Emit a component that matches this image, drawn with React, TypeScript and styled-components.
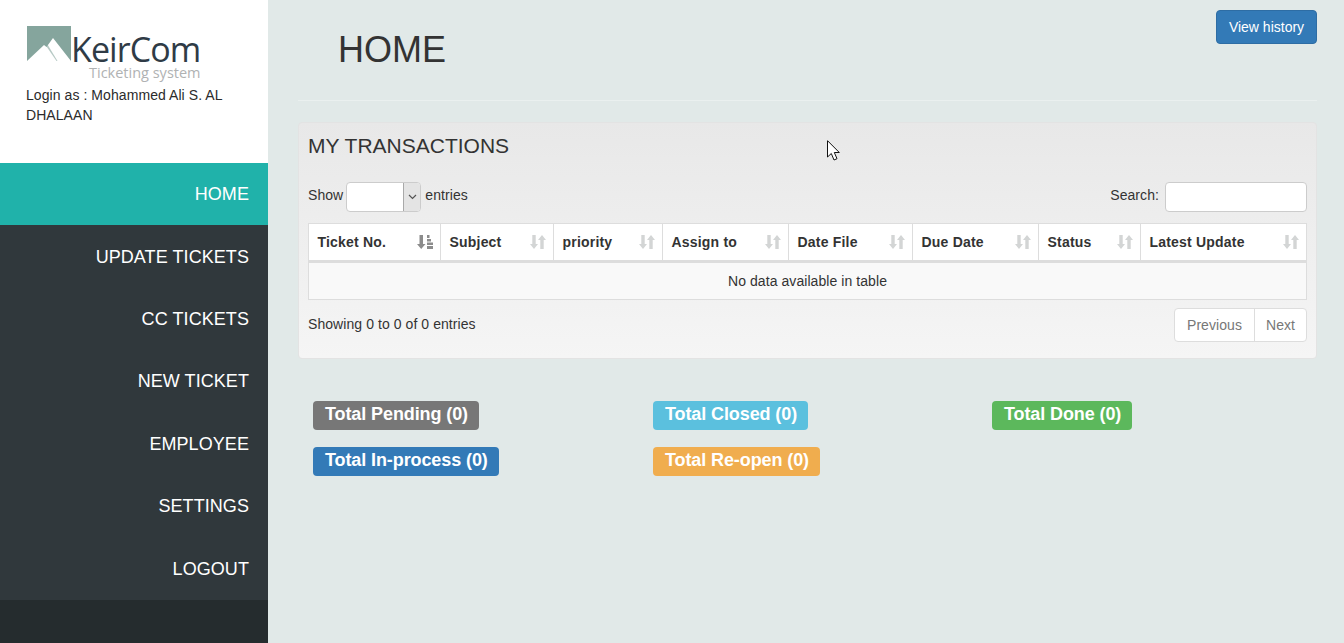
import styled, { createGlobalStyle } from 'styled-components'

const GlobalStyle = createGlobalStyle`
  * { box-sizing: border-box; }
  html, body { margin: 0; padding: 0; height: 100%; }
  body {
    font-family: "Liberation Sans", Arial, sans-serif;
    font-size: 14px;
    line-height: 20px;
    letter-spacing: 0.07px;
    color: #333;
    background: #e1e9e8;
  }
`;

const Page = styled.div`
  display: flex;
  width: 1344px;
  height: 643px;
  overflow: hidden;
`;

const Sidebar = styled.aside`
  width: 268px;
  flex: none;
  display: flex;
  flex-direction: column;
  background: #252c2e;
`;

const Brand = styled.div`
  height: 163px;
  background: #fff;
  padding: 26px 26px 0;
`;

const LogoRow = styled.div`
  display: flex;
  height: 36px;
  align-items: flex-end;
  padding-left: 1px;
`;

const LogoName = styled.span`
  font-family: "Open Sans", sans-serif;
  font-size: 34px;
  line-height: 26px;
  letter-spacing: -0.9px;
  color: #2f3b46;
`;

const LogoTag = styled.div`
  font-family: "Open Sans", sans-serif;
  font-size: 14.5px;
  line-height: 18px;
  letter-spacing: 0;
  color: #b0b2b3;
  margin: 2px 0 0 63px;
`;

const LoginText = styled.div`
  color: #2b2b2b;
  margin-top: 3px;
`;

const NavList = styled.nav`
  background: #30383c;
`;

const NavItem = styled.a<{ $active?: boolean }>`
  display: flex;
  align-items: center;
  justify-content: flex-end;
  height: 62.4px;
  padding-right: 19px;
  font-size: 18px;
  color: #fff;
  background: ${props => (props.$active ? '#20b2aa' : 'transparent')};
`;

const Main = styled.main`
  flex: 1;
  padding: 0 28px 0 30px;
`;

const PageHeader = styled.header`
  height: 101px;
  display: flex;
  justify-content: space-between;
  align-items: flex-start;
  border-bottom: 1px solid #eaf0ef;
`;

const Title = styled.h1`
  margin: 30px 0 0 40px;
  font-size: 36px;
  line-height: 40px;
  font-weight: 400;
  letter-spacing: 0;
  color: #333;
`;

const HistoryButton = styled.button`
  margin-top: 10px;
  width: 101px;
  height: 34px;
  padding: 0;
  font: inherit;
  color: #fff;
  background: #337ab7;
  border: 1px solid #2e6da4;
  border-radius: 4px;
`;

const Well = styled.section`
  position: relative;
  margin-top: 21px;
  height: 237px;
  padding: 0 9px 0 10px;
  background: linear-gradient(to bottom, #e8e8e8, #f5f5f5);
  border: 1px solid #e3e3e3;
  border-radius: 4px;
`;

const WellTitle = styled.h3`
  margin: 11px 0 0 -1px;
  font-size: 21px;
  line-height: 24px;
  font-weight: 400;
  letter-spacing: 0;
  color: #333;
`;

const Controls = styled.div`
  display: flex;
  justify-content: space-between;
  margin: 24px 0 11px -1px;
  height: 30px;
`;

const ControlGroup = styled.label`
  display: flex;
  align-items: flex-start;
  gap: 4px;
  line-height: 26px;
`;

const SelectBox = styled.div`
  display: flex;
  justify-content: flex-end;
  width: 75px;
  height: 30px;
  margin-left: -1px;
  background: #fff;
  border: 1px solid #ccc;
  border-radius: 4px;
  overflow: hidden;
`;

const SelectArrow = styled.span`
  display: flex;
  align-items: center;
  justify-content: center;
  width: 17px;
  background: #e4e4e4;
  border-left: 1px solid #a9a9a9;
  color: #555;
`;

const SearchInput = styled.input`
  width: 142px;
  height: 30px;
  background: #fff;
  border: 1px solid #ccc;
  border-radius: 4px;
  margin-left: 2px;
`;

const Table = styled.table`
  width: 998px;
  margin-left: -1px;
  table-layout: fixed;
  border-collapse: collapse;
  background: #f9f9f9;
`;

const HeadCell = styled.th<{ $width: number }>`
  width: ${props => props.$width}px;
  height: 38px;
  padding: 0 7px 0 8.5px;
  background: #fff;
  border: 1px solid #ddd;
  border-bottom: 3px solid #ddd;
  text-align: left;
  letter-spacing: 0.2px;
  color: #333;
`;

const HeadInner = styled.div`
  display: flex;
  align-items: center;
  justify-content: space-between;
`;

const SortIcon = styled.svg<{ $active?: boolean }>`
  flex: none;
  width: 16px;
  height: 16px;
  fill: ${props => (props.$active ? '#8c8c8c' : '#d3d5d5')};
`;

const EmptyCell = styled.td`
  height: 38px;
  padding: 0;
  border: 1px solid #ddd;
  text-align: center;
`;

const Footer = styled.div`
  display: flex;
  justify-content: space-between;
  margin: 8px 0 0 -1px;
  height: 34px;
  line-height: 32px;
`;

const Pager = styled.div`
  display: flex;
  background: #fff;
  border: 1px solid #ddd;
  border-radius: 4px;
  height: 34px;
  color: #777;
`;

const PagerItem = styled.span<{ $width: number }>`
  display: flex;
  align-items: center;
  justify-content: center;
  width: ${props => props.$width}px;
  & + & { border-left: 1px solid #ddd; }
`;

const Cursor = styled.svg`
  position: absolute;
  left: 528px;
  top: 17px;
  width: 13px;
  height: 21px;
`;

const TotalsGrid = styled.div`
  display: grid;
  grid-template-columns: 340px 339px auto;
  grid-auto-rows: 29px;
  row-gap: 17px;
  justify-items: start;
  margin: 42px 0 0 15px;
`;

const TotalBadge = styled.span<{ $color: string }>`
  display: inline-flex;
  align-items: center;
  height: 29px;
  padding: 0 11px 3px 12px;
  font-size: 18px;
  font-weight: 700;
  letter-spacing: -0.1px;
  color: #fff;
  background: ${props => props.$color};
  border-radius: 4px;
`;

const navItems = ['HOME', 'UPDATE TICKETS', 'CC TICKETS', 'NEW TICKET', 'EMPLOYEE', 'SETTINGS', 'LOGOUT'];

const columns = [
  { name: 'Ticket No.', width: 132, sorted: true },
  { name: 'Subject', width: 113 },
  { name: 'priority', width: 109 },
  { name: 'Assign to', width: 126 },
  { name: 'Date File', width: 124 },
  { name: 'Due Date', width: 126 },
  { name: 'Status', width: 102 },
  { name: 'Latest Update', width: 166 },
];

const totals = [
  { label: 'Total Pending (0)', color: '#777777' },
  { label: 'Total Closed (0)', color: '#5bc0de' },
  { label: 'Total Done (0)', color: '#5cb85c' },
  { label: 'Total In-process (0)', color: '#337ab7' },
  { label: 'Total Re-open (0)', color: '#f0ad4e' },
];

const Logo = () => (
  <svg width="44" height="36" viewBox="0 0 44 36">
    <rect width="44" height="35" fill="#85a59d" />
    <path d="M0 35L17 19L19.500 21L26 12L44 35Z" fill="#fff" />
    <path d="M20.500 18.500L30.500 35H29.500L19.500 20.500Z" fill="#85a59d" opacity="0.6" />
  </svg>
);

const SortGlyph = ({ active }: { active?: boolean }) => (
  <SortIcon $active={active} viewBox="0 0 16 16">
    {active ? (
      <path d="M2.500 1h3.500v9h2.500L4.200 15 0 10h2.500zM10 1h2.500v3H10zM10 5h4v2.500h-4zM10 8.500h6V11h-6zM10 12h6v3h-6z" />
    ) : (
      <path d="M2.300 1h3.400v9H8l-4 5-4-5h2.300zM10.300 15V6H8l4-5 4 5h-2.300v9z" />
    )}
  </SortIcon>
);

const App = () => {
  return (
    <Page>
      <GlobalStyle />
      <Sidebar>
        <Brand>
          <LogoRow>
            <Logo />
            <LogoName>KeirCom</LogoName>
          </LogoRow>
          <LogoTag>Ticketing system</LogoTag>
          <LoginText>Login as : Mohammed Ali S. AL DHALAAN</LoginText>
        </Brand>
        <NavList>
          {navItems.map((item, i) => (
            <NavItem key={item} $active={i === 0}>{item}</NavItem>
          ))}
        </NavList>
      </Sidebar>
      <Main>
        <PageHeader>
          <Title>HOME</Title>
          <HistoryButton>View history</HistoryButton>
        </PageHeader>
        <Well>
          <WellTitle>MY TRANSACTIONS</WellTitle>
          <Cursor viewBox="0 0 13 21">
            <path d="M.5.700V17l3.800-3.500L7 20l3-1.300-2.700-6.200h5z" fill="#fff" stroke="#111" strokeWidth="1" />
          </Cursor>
          <Controls>
            <ControlGroup>
              Show
              <SelectBox>
                <SelectArrow>
                  <svg width="9" height="6" viewBox="0 0 9 6">
                    <path d="M1 1l3.500 3.500L8 1" fill="none" stroke="#555" strokeWidth="1.200" />
                  </svg>
                </SelectArrow>
              </SelectBox>
              entries
            </ControlGroup>
            <ControlGroup>
              Search:
              <SearchInput />
            </ControlGroup>
          </Controls>
          <Table>
            <thead>
              <tr>
                {columns.map(col => (
                  <HeadCell key={col.name} $width={col.width}>
                    <HeadInner>
                      {col.name}
                      <SortGlyph active={col.sorted} />
                    </HeadInner>
                  </HeadCell>
                ))}
              </tr>
            </thead>
            <tbody>
              <tr>
                <EmptyCell colSpan={8}>No data available in table</EmptyCell>
              </tr>
            </tbody>
          </Table>
          <Footer>
            <span>Showing 0 to 0 of 0 entries</span>
            <Pager>
              <PagerItem $width={79}>Previous</PagerItem>
              <PagerItem $width={52}>Next</PagerItem>
            </Pager>
          </Footer>
        </Well>
        <TotalsGrid>
          {totals.map(total => (
            <div key={total.label}>
              <TotalBadge $color={total.color}>{total.label}</TotalBadge>
            </div>
          ))}
        </TotalsGrid>
      </Main>
    </Page>
  );
}

export default App;
